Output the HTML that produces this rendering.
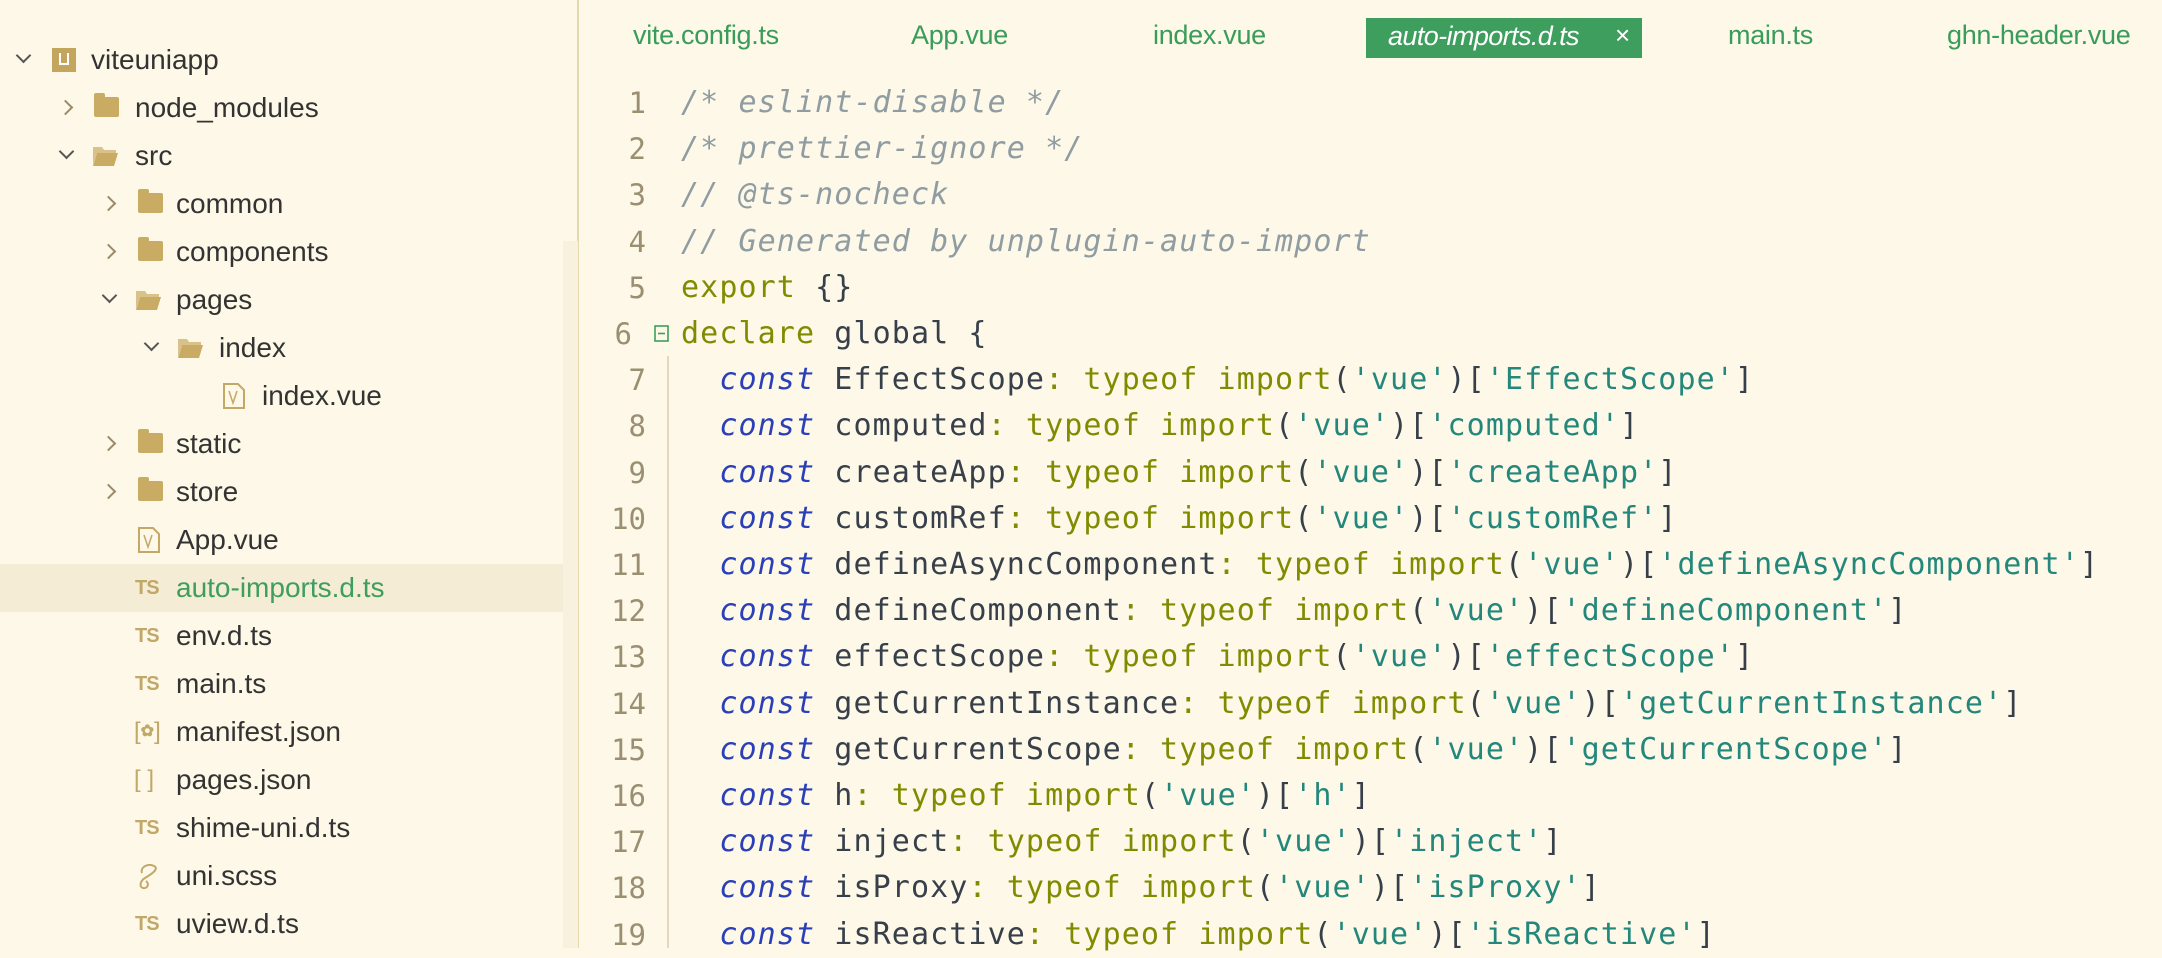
<!DOCTYPE html>
<html><head><meta charset="utf-8">
<style>
*{margin:0;padding:0;box-sizing:border-box}
body{width:2162px;height:948px;overflow:hidden;background:#fdf8e7;position:relative;font-family:"Liberation Sans",sans-serif}
#side{position:absolute;left:0;top:0;width:579px;height:948px;background:#fdf8e7;border-right:2px solid #e6d9b0}
#scroll{position:absolute;left:563px;top:241px;width:15px;height:707px;background:#f7f1dd}
.row{position:absolute;left:0;height:48px;width:563px;font-size:28px;color:#333;line-height:48px}
.row.sel{background:#f4ecd4}
.row span{position:absolute;top:0}
.chev{position:absolute;width:11px;height:11px;border-right:2.5px solid #555;border-bottom:2.5px solid #555}
.chev.d{transform:rotate(45deg);top:14px}
.chev.r{transform:rotate(-45deg);top:18px;border-color:#9a8a6a}
.fold{position:absolute;top:13px;width:25px;height:20px;background:#c9ab63;border-radius:2px}
.fold:before{content:"";position:absolute;left:0;top:-4px;width:11px;height:5px;background:#c9ab63;border-radius:2px 2px 0 0}
.ofold{position:absolute;top:13px;width:26px;height:21px}
.ts{position:absolute;font-size:20px;font-weight:bold;color:#c2a866;letter-spacing:-1px}
#tabs span{position:absolute;top:20px;font-size:27px;color:#3a9c5a;letter-spacing:-0.3px}
#act{position:absolute;left:1366px;top:18px;width:276px;height:40px;background:#3e9e5e}
#act span{position:absolute;left:22px;top:3px;font-size:27px;color:#fff;font-style:italic;letter-spacing:-0.6px}
#act b{position:absolute;left:249px;top:2px;font-size:26px;color:#fff;font-weight:normal}
.ln{position:absolute;left:560px;width:86px;text-align:right;font-family:"DejaVu Sans Mono",monospace;font-size:29px;color:#9b8f72;line-height:46px}
.cd{position:absolute;left:681px;font-family:"DejaVu Sans Mono",monospace;font-size:30px;letter-spacing:1.1px;color:#37404a;line-height:46px;white-space:pre}
.c{color:#8f9ca1;font-style:italic}
.k{color:#7f8c00}
.b{color:#2a3fb8;font-style:italic}
.s{color:#23877b}
</style></head><body>
<div id="side">
<div id="scroll"></div>
</div>
<div class="row" style="top:36px"><i class="chev d" style="left:18px"></i><span style="left:52px;top:12px;width:24px;height:24px;background:#c4a55e;display:block"><span style="left:7px;top:5px;width:10px;height:12px;border:2px solid #fff;border-top:none;display:block"></span></span><span style="left:91px">viteuniapp</span></div>
<div class="row" style="top:84px"><i class="chev r" style="left:60px"></i><i class="fold" style="left:94px"></i><span style="left:135px">node_modules</span></div>
<div class="row" style="top:132px"><i class="chev d" style="left:61px"></i><svg class="ofold" style="left:92px" viewBox="0 0 26 21"><path d="M1 2h9l2 3h12v3H5L1 20z" fill="#d9c189"/><path d="M5 8h21l-4 13H1z" fill="#c9ab63"/></svg><span style="left:135px">src</span></div>
<div class="row" style="top:180px"><i class="chev r" style="left:103px"></i><i class="fold" style="left:138px"></i><span style="left:176px">common</span></div>
<div class="row" style="top:228px"><i class="chev r" style="left:103px"></i><i class="fold" style="left:138px"></i><span style="left:176px">components</span></div>
<div class="row" style="top:276px"><i class="chev d" style="left:104px"></i><svg class="ofold" style="left:135px" viewBox="0 0 26 21"><path d="M1 2h9l2 3h12v3H5L1 20z" fill="#d9c189"/><path d="M5 8h21l-4 13H1z" fill="#c9ab63"/></svg><span style="left:176px">pages</span></div>
<div class="row" style="top:324px"><i class="chev d" style="left:146px"></i><svg class="ofold" style="left:177px" viewBox="0 0 26 21"><path d="M1 2h9l2 3h12v3H5L1 20z" fill="#d9c189"/><path d="M5 8h21l-4 13H1z" fill="#c9ab63"/></svg><span style="left:219px">index</span></div>
<div class="row" style="top:372px"><svg style="position:absolute;left:223px;top:11px" width="22" height="26" viewBox="0 0 22 26"><path d="M1 1h14l6 6v18H1z" fill="none" stroke="#c4a866" stroke-width="2"/><path d="M6 8l4 12 4-12" fill="none" stroke="#c4a866" stroke-width="1.5"/></svg><span style="left:262px">index.vue</span></div>
<div class="row" style="top:420px"><i class="chev r" style="left:103px"></i><i class="fold" style="left:138px"></i><span style="left:176px">static</span></div>
<div class="row" style="top:468px"><i class="chev r" style="left:103px"></i><i class="fold" style="left:138px"></i><span style="left:176px">store</span></div>
<div class="row" style="top:516px"><svg style="position:absolute;left:138px;top:11px" width="22" height="26" viewBox="0 0 22 26"><path d="M1 1h14l6 6v18H1z" fill="none" stroke="#c4a866" stroke-width="2"/><path d="M6 8l4 12 4-12" fill="none" stroke="#c4a866" stroke-width="1.5"/></svg><span style="left:176px">App.vue</span></div>
<div class="row sel" style="top:564px"><span class="ts" style="left:135px">TS</span><span style="left:176px;color:#3e9e5e">auto-imports.d.ts</span></div>
<div class="row" style="top:612px"><span class="ts" style="left:135px">TS</span><span style="left:176px">env.d.ts</span></div>
<div class="row" style="top:660px"><span class="ts" style="left:135px">TS</span><span style="left:176px">main.ts</span></div>
<div class="row" style="top:708px"><span style="left:134px;color:#c2a866;font-size:24px">[<b style="font-size:16px;vertical-align:3px">✿</b>]</span><span style="left:176px">manifest.json</span></div>
<div class="row" style="top:756px"><span style="left:134px;color:#c2a866;font-size:24px">[ ]</span><span style="left:176px">pages.json</span></div>
<div class="row" style="top:804px"><span class="ts" style="left:135px">TS</span><span style="left:176px">shime-uni.d.ts</span></div>
<div class="row" style="top:852px"><svg style="position:absolute;left:136px;top:11px" width="24" height="28" viewBox="0 0 24 28"><path d="M6 10C4 4 12 0 18 3s-4 9-9 12c-5 3-6 9-2 10s7-4 3-7" fill="none" stroke="#c4a866" stroke-width="2"/></svg><span style="left:176px">uni.scss</span></div>
<div class="row" style="top:900px"><span class="ts" style="left:135px">TS</span><span style="left:176px">uview.d.ts</span></div>

<div id="tabs">
<span style="left:633px">vite.config.ts</span>
<span style="left:911px">App.vue</span>
<span style="left:1153px">index.vue</span>
<span style="left:1728px">main.ts</span>
<span style="left:1947px">ghn-header.vue</span>
</div>
<div id="act"><span>auto-imports.d.ts</span><b>×</b></div>

<div style="position:absolute;left:667px;top:356px;width:2px;height:592px;background:#e2d8bd"></div>
<svg style="position:absolute;left:654px;top:325px" width="16" height="18" viewBox="0 0 16 18"><rect x="1" y="1" width="13" height="15" fill="none" stroke="#3e9e5e" stroke-width="1.6"/><path d="M4 8.5h7" stroke="#3e9e5e" stroke-width="1.6"/></svg>

<div class="ln" style="top:80px">1</div><div class="cd" style="top:80px"><span class="c">/* eslint-disable */</span></div>
<div class="ln" style="top:126px">2</div><div class="cd" style="top:126px"><span class="c">/* prettier-ignore */</span></div>
<div class="ln" style="top:172px">3</div><div class="cd" style="top:172px"><span class="c">// @ts-nocheck</span></div>
<div class="ln" style="top:219px">4</div><div class="cd" style="top:219px"><span class="c">// Generated by unplugin-auto-import</span></div>
<div class="ln" style="top:265px">5</div><div class="cd" style="top:265px"><span class="k">export</span> {}</div>
<div class="ln" style="top:311px;width:72px">6</div><div class="cd" style="top:311px"><span class="k">declare</span> global {</div>
<div class="ln" style="top:357px">7</div><div class="cd" style="top:357px">  <span class="b">const</span> EffectScope<span class="k">: typeof import</span>(<span class="s">'vue'</span>)[<span class="s">'EffectScope'</span>]</div>
<div class="ln" style="top:403px">8</div><div class="cd" style="top:403px">  <span class="b">const</span> computed<span class="k">: typeof import</span>(<span class="s">'vue'</span>)[<span class="s">'computed'</span>]</div>
<div class="ln" style="top:450px">9</div><div class="cd" style="top:450px">  <span class="b">const</span> createApp<span class="k">: typeof import</span>(<span class="s">'vue'</span>)[<span class="s">'createApp'</span>]</div>
<div class="ln" style="top:496px">10</div><div class="cd" style="top:496px">  <span class="b">const</span> customRef<span class="k">: typeof import</span>(<span class="s">'vue'</span>)[<span class="s">'customRef'</span>]</div>
<div class="ln" style="top:542px">11</div><div class="cd" style="top:542px">  <span class="b">const</span> defineAsyncComponent<span class="k">: typeof import</span>(<span class="s">'vue'</span>)[<span class="s">'defineAsyncComponent'</span>]</div>
<div class="ln" style="top:588px">12</div><div class="cd" style="top:588px">  <span class="b">const</span> defineComponent<span class="k">: typeof import</span>(<span class="s">'vue'</span>)[<span class="s">'defineComponent'</span>]</div>
<div class="ln" style="top:634px">13</div><div class="cd" style="top:634px">  <span class="b">const</span> effectScope<span class="k">: typeof import</span>(<span class="s">'vue'</span>)[<span class="s">'effectScope'</span>]</div>
<div class="ln" style="top:681px">14</div><div class="cd" style="top:681px">  <span class="b">const</span> getCurrentInstance<span class="k">: typeof import</span>(<span class="s">'vue'</span>)[<span class="s">'getCurrentInstance'</span>]</div>
<div class="ln" style="top:727px">15</div><div class="cd" style="top:727px">  <span class="b">const</span> getCurrentScope<span class="k">: typeof import</span>(<span class="s">'vue'</span>)[<span class="s">'getCurrentScope'</span>]</div>
<div class="ln" style="top:773px">16</div><div class="cd" style="top:773px">  <span class="b">const</span> h<span class="k">: typeof import</span>(<span class="s">'vue'</span>)[<span class="s">'h'</span>]</div>
<div class="ln" style="top:819px">17</div><div class="cd" style="top:819px">  <span class="b">const</span> inject<span class="k">: typeof import</span>(<span class="s">'vue'</span>)[<span class="s">'inject'</span>]</div>
<div class="ln" style="top:865px">18</div><div class="cd" style="top:865px">  <span class="b">const</span> isProxy<span class="k">: typeof import</span>(<span class="s">'vue'</span>)[<span class="s">'isProxy'</span>]</div>
<div class="ln" style="top:912px">19</div><div class="cd" style="top:912px">  <span class="b">const</span> isReactive<span class="k">: typeof import</span>(<span class="s">'vue'</span>)[<span class="s">'isReactive'</span>]</div>
</body></html>
